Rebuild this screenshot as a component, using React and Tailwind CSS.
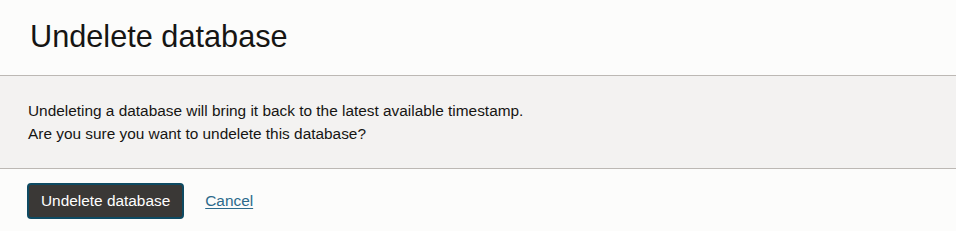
export default function App() {
  return (
    <div className="w-[956px] h-[231px] bg-[#fcfcfb] flex flex-col" style={{ fontFamily: '"Liberation Sans", Arial, sans-serif' }}>
      <div className="h-[76px] shrink-0 flex items-center px-[30px] border-b border-[#bcb8b4]">
        <h1 className="text-[30.7px] leading-none text-[#161513] pb-[1px]">Undelete database</h1>
      </div>
      <div className="h-[93px] shrink-0 bg-[#f3f2f1] border-b border-[#bcb8b4] px-[28px] pt-[23px] text-[15.4px] leading-[23px] text-[#161513]">
        <p>Undeleting a database will bring it back to the latest available timestamp.</p>
        <p>Are you sure you want to undelete this database?</p>
      </div>
      <div className="flex items-center px-[27px] pt-[14px] gap-[21px]">
        <button className="h-[36px] px-[12px] rounded-[4px] bg-[#3a3836] border-2 border-[#0e4a62] text-white text-[15.4px]">
          Undelete database
        </button>
        <a href="#" className="text-[15.4px] text-[#2c6a8c] underline underline-offset-2">Cancel</a>
      </div>
    </div>
  );
}
